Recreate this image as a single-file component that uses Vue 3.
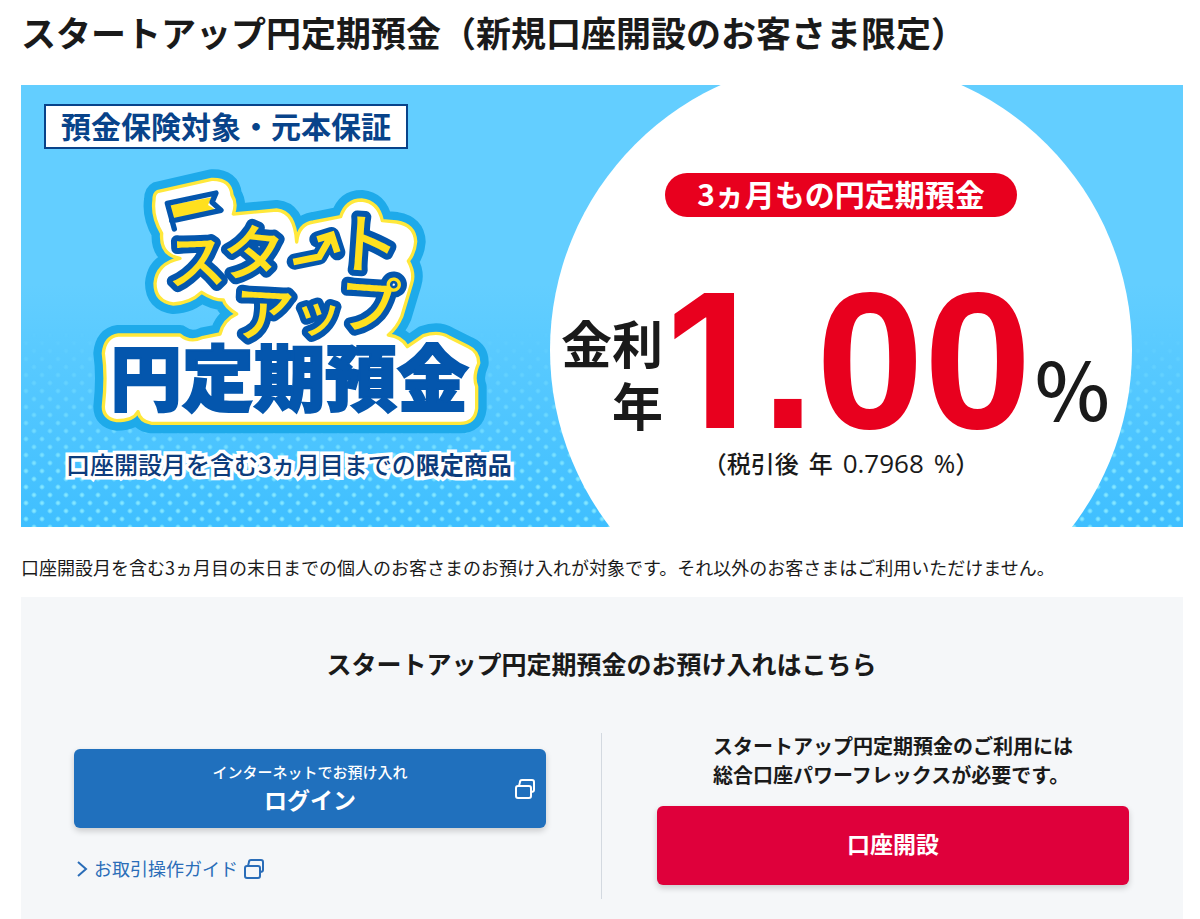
<script setup>
const notice = '口座開設月を含む3ヵ月目の末日までの個人のお客さまのお預け入れが対象です。それ以外のお客さまはご利用いただけません。'
</script>

<template>
  <main class="page">
    <h1 class="title">スタートアップ円定期預金（新規口座開設のお客さま限定）</h1>

    <section class="banner">
      <div class="product">
        <p class="badge">預金保険対象・元本保証</p>
        <svg class="logo" viewBox="0 0 1260 840" role="img" aria-label="スタートアップ円定期預金">
          <defs>
            <path id="halo" d="M232 95 L395 58 Q452 56 456 105 Q472 130 460 162 L590 150 Q645 155 650 246 Q655 192 700 186 L782 170 Q798 120 845 120 Q895 125 907 182 L950 186 Q1005 195 1007 245 Q1004 280 985 303 Q1005 340 995 370 L965 470 Q950 505 925 525 Q965 530 982 560 L1030 527 Q1075 512 1105 530 L1165 560 Q1197 575 1196 610 Q1178 650 1190 680 V745 Q1185 790 1140 790 H215 Q180 785 174 755 Q160 782 110 782 Q70 775 70 740 Q80 650 70 580 Q75 530 115 525 H300 Q330 550 370 532 L420 522 Q430 480 470 462 Q435 440 430 420 Q400 420 365 397 Q330 430 280 432 Q225 425 225 370 Q230 310 300 295 Q240 285 245 220 Q215 170 222 120 Q222 100 232 95Z" />
          </defs>
          <use href="#halo" class="halo-outer" />
          <use href="#halo" class="halo-inner" />
          <path class="flag-fill" d="M268 136 L395 112 L384 135 L408 150 L276 176Z" />
          <path class="flag-line" d="M283 207 L262 130 L408 99 L396 127 L423 151 L275 183" />
          <g class="kana">
            <text x="260" y="371" font-size="180" transform="rotate(-2 350 300)">ス</text>
            <text x="425" y="350" font-size="188" transform="rotate(6 520 280)">タ</text>
            <text x="764" y="326" font-size="196" transform="rotate(4 880 250)">ト</text>
            <text x="461" y="530" font-size="182" transform="rotate(3 550 460)">ア</text>
            <text x="641" y="515" font-size="146">ッ</text>
            <text x="776" y="504" font-size="186" transform="rotate(4 870 430)">プ</text>
          </g>
          <path class="arrow-line" d="M644 305 L718 290 L750 234 M712 238 L755 225 L772 277" />
          <path class="arrow-fill" d="M640 306 L718 290 L750 234 M712 238 L755 225 L772 277" />
          <text class="kanji" x="91" y="734" font-size="215">円定期預金</text>
        </svg>
        <p class="term">口座開設月を含む3ヵ月目までの<b>限定商品</b></p>
      </div>

      <div class="offer">
        <p class="pill">3ヵ月もの円定期預金</p>
        <div class="rate">
          <p class="rate-label">金利<br />年</p>
          <p class="rate-value"><span class="one">1</span><span class="point">.</span><span>00</span></p>
          <span class="percent">%</span>
        </div>
        <p class="after-tax"><span>（税引後</span><span>年</span><span class="net">0.7968</span><span><i class="net">%</i>）</span></p>
      </div>
    </section>

    <p class="notice">{{ notice }}</p>

    <section class="panel">
      <h2 class="panel-title">スタートアップ円定期預金のお預け入れはこちら</h2>
      <div class="choices">
        <div class="choice login">
          <button class="button blue" type="button">
            <small>インターネットでお預け入れ</small>
            <strong>ログイン</strong>
            <svg class="window-icon" viewBox="0 0 20 20" aria-hidden="true">
              <rect x="1" y="7" width="15" height="12" rx="2" />
              <path d="M4 7 L5 3 Q5 1 7 1 H17 Q19 1 19 3 V11 Q19 13 16 13" />
            </svg>
          </button>
          <a class="guide" href="#guide">
            <svg class="chevron" viewBox="0 0 12 16" aria-hidden="true"><path d="M2 1 L10 8 L2 15" /></svg>
            <span>お取引操作ガイド</span>
            <svg class="window-icon" viewBox="0 0 20 20" aria-hidden="true">
              <rect x="1" y="7" width="15" height="12" rx="2" />
              <path d="M4 7 L5 3 Q5 1 7 1 H17 Q19 1 19 3 V11 Q19 13 16 13" />
            </svg>
          </a>
        </div>
        <div class="divider"></div>
        <div class="choice">
          <p class="requirement">スタートアップ円定期預金のご利用には<br />総合口座パワーフレックスが必要です。</p>
          <button class="button red" type="button"><strong>口座開設</strong></button>
        </div>
      </div>
    </section>
  </main>
</template>

<style>
body {
  background: #fff;
}
</style>

<style scoped>
.page {
  padding: 0 17px 0 21px;
  color: #1a1a1a;
  font-family: "Noto Sans CJK JP", "Noto Sans", sans-serif;
}

p,
h1,
h2 {
  margin: 0;
}

.title {
  padding: 6px 0 27px;
  font-size: 35px;
  font-weight: 700;
  line-height: 52px;
}

.banner {
  position: relative;
  display: grid;
  grid-template-columns: 1fr 582px;
  min-height: 442px;
  padding-right: 51px;
  overflow: hidden;
  background: linear-gradient(#63ceff 45%, #3fbfff);
}

.banner::before {
  content: "";
  position: absolute;
  inset: 0;
  background:
    radial-gradient(circle, #82e6ff 1px, transparent 3px) 5px 2px / 16px 16px,
    radial-gradient(circle, #82e6ff 1px, transparent 3px) 13px 10px / 16px 16px;
  mask-image: linear-gradient(transparent 55%, #000 90%);
}

.product {
  position: relative;
  display: flex;
  flex-direction: column;
  align-items: flex-start;
  padding: 19px 0 0 23px;
}

.badge {
  height: 41px;
  padding: 0 15px;
  border: 2px solid #08438a;
  background: #fff;
  color: #08438a;
  font-size: 30px;
  font-weight: 700;
  line-height: 38px;
}

.logo {
  width: 420px;
  height: 280px;
  margin: 11px 0 0 36px;
}

.halo-outer {
  fill: #1eaaea;
  stroke: #1eaaea;
  stroke-width: 60;
  stroke-linejoin: round;
}

.halo-inner {
  fill: #fff;
  stroke: #ffe83b;
  stroke-width: 10;
  stroke-linejoin: round;
}

.flag-fill {
  fill: #ffe01e;
}

.flag-line,
.arrow-line,
.arrow-fill {
  fill: none;
  stroke: #0456ad;
  stroke-width: 16;
  stroke-linejoin: round;
  stroke-linecap: round;
}

.arrow-line {
  stroke-width: 48;
}

.arrow-fill {
  stroke: #ffe01e;
  stroke-width: 20;
  stroke-linejoin: miter;
  stroke-linecap: butt;
}

.kana {
  fill: #ffe01e;
  stroke: #0456ad;
  stroke-width: 36;
  stroke-linejoin: round;
  paint-order: stroke;
  font-weight: 500;
}

.kanji {
  fill: #0456ad;
  stroke: #0456ad;
  stroke-width: 6;
  font-weight: 900;
}

.term {
  margin: 6px 0 0 22px;
  color: #0c3c7c;
  font-size: 24px;
  font-weight: 500;
  line-height: 36px;
  -webkit-text-stroke: 7px #fff;
  paint-order: stroke fill;
  white-space: nowrap;
}

.offer {
  position: relative;
  display: flex;
  flex-direction: column;
  align-items: center;
  padding-top: 88px;
}

.offer::before {
  content: "";
  position: absolute;
  top: -26px;
  left: 0;
  width: 582px;
  height: 582px;
  border-radius: 50%;
  background: #fff;
}

.offer > * {
  position: relative;
}

.pill {
  height: 44px;
  padding: 0 32px;
  border-radius: 22px;
  background: #e8001e;
  color: #fff;
  font-size: 30px;
  font-weight: 700;
  line-height: 41px;
}

.rate {
  display: flex;
  align-self: stretch;
  align-items: flex-end;
  height: 234px;
  padding-left: 9px;
}

.rate-label {
  width: 104px;
  padding-bottom: 16px;
  font-size: 51px;
  font-weight: 700;
  line-height: 62px;
  text-align: right;
}

.rate-value {
  display: flex;
  align-items: baseline;
  padding-left: 3px;
  color: #e8001e;
  font-family: "Liberation Sans", Arial, sans-serif;
  font-size: 194px;
  font-weight: 700;
  line-height: 180px;
}

.one {
  width: 94px;
  font-family: Inter, sans-serif;
  font-size: 186px;
}

.point {
  padding: 0 1px;
}

.percent {
  padding: 0 0 18px 3px;
  font-size: 80px;
  font-weight: 500;
  line-height: 94px;
}

.after-tax {
  display: flex;
  gap: 10px;
  align-items: baseline;
  margin-top: -6px;
  font-size: 24px;
  font-weight: 500;
  line-height: 36px;
}

.net {
  font-family: "Open Sans", sans-serif;
  font-size: 26px;
  font-style: normal;
  font-weight: 400;
}

.notice {
  padding: 27px 0 16px;
  font-size: 18px;
  line-height: 27px;
}

.panel {
  padding: 47px 54px 20px 53px;
  background: #f5f7f9;
}

.panel-title {
  font-size: 25px;
  font-weight: 700;
  line-height: 38px;
  text-align: center;
}

.choices {
  display: grid;
  grid-template-columns: 1fr 1px 1fr;
  gap: 55px;
  margin-top: 49px;
}

.choice {
  display: flex;
  flex-direction: column;
}

.login {
  padding-top: 18px;
}

.divider {
  margin-top: 2px;
  background: #d3d9e0;
}

.button {
  position: relative;
  display: flex;
  flex-direction: column;
  align-items: center;
  justify-content: center;
  height: 79px;
  padding: 0 0 2px;
  border: 0;
  border-radius: 6px;
  box-shadow: 0 3px 6px #0000002e;
  color: #fff;
  font-family: inherit;
  cursor: pointer;
}

.button small {
  font-size: 15px;
  font-weight: 500;
  line-height: 22px;
}

.button strong {
  font-size: 23px;
  font-weight: 700;
  line-height: 32px;
}

.button .window-icon {
  position: absolute;
  top: 30px;
  right: 11px;
}

.blue {
  background: #2070bd;
}

.red {
  padding-bottom: 6px;
  background: #df003b;
}

.window-icon {
  width: 20px;
  height: 20px;
}

.window-icon,
.chevron {
  fill: none;
  stroke: currentColor;
  stroke-width: 2;
}

.guide {
  display: flex;
  align-items: center;
  align-self: flex-start;
  gap: 6px;
  margin: 27px 0 17px 2px;
  color: #2a6db8;
  font-size: 18px;
  line-height: 27px;
  text-decoration: none;
}

.chevron {
  width: 12px;
  height: 16px;
}

.requirement {
  margin: 0 auto 17px;
  font-size: 20px;
  font-weight: 700;
  line-height: 29px;
}
</style>
